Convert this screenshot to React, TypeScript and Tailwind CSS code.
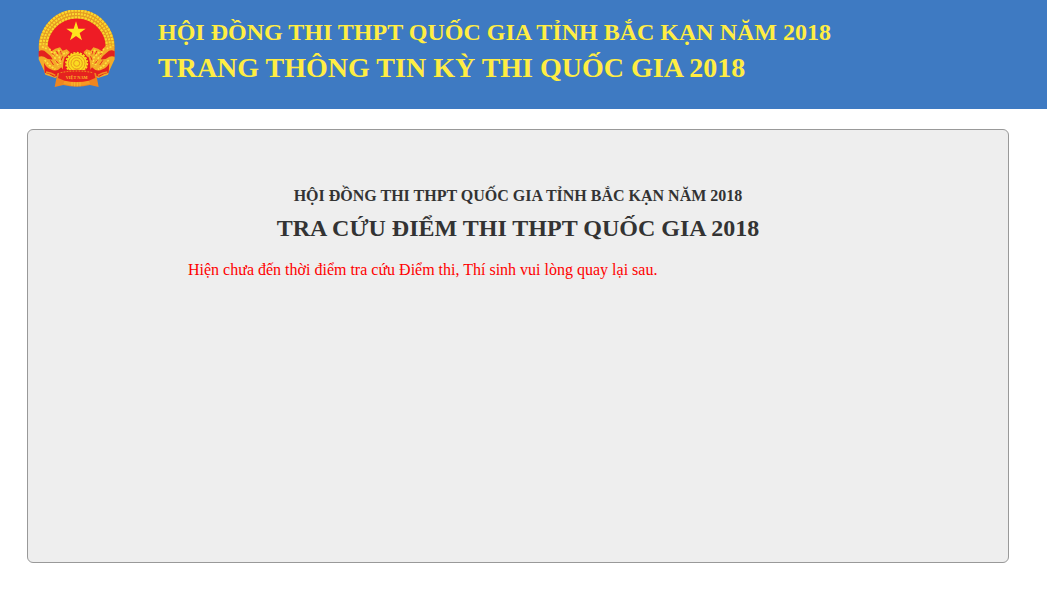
const STAR = '138,52 145,74 167,74 149,87 156,109 138,96 120,109 127,87 109,74 131,74';

function WheatSide() {
  return (
    <g>
      <path
        d="M28 126 L44 122 L56 128 L64 142 L76 134 L90 130 L98 140 L110 136 L119 144 L116 155 L104 160 L100 176 L98 206 L76 222 L46 212 L42 200 L26 166 Z"
        fill="#f3ab28"
      />
      <g fill="none" stroke="#fde33c" strokeWidth="5" strokeDasharray="6 4">
        <path d="M58 134 L74 160 L86 188" />
        <path d="M44 168 L58 184 L76 196" />
        <path d="M72 144 L88 160 L92 180" />
        <path d="M84 138 L98 150 L112 146" />
        <path d="M36 128 L50 134" />
      </g>
      <g fill="none" stroke="#ea2a20" strokeWidth="3" strokeLinecap="round">
        <path d="M66 148 L72 154" />
        <path d="M80 142 L84 150" />
        <path d="M92 142 L94 150" />
        <path d="M78 170 L84 178" />
        <path d="M62 170 L70 182" />
        <path d="M98 158 L94 168" />
      </g>
      <path d="M26 142 Q38 134 50 146 Q62 154 68 166 Q54 168 42 158 Q34 156 26 158 Z" fill="#e3201f" />
      <path d="M42 176 Q48 190 62 196 Q80 206 94 190 L104 204 L90 214 L72 218 Q56 208 44 206 Z" fill="#e3201f" />
      <path d="M48 204 Q64 206 76 214" fill="none" stroke="#f3901f" strokeWidth="4" />
    </g>
  );
}

function Emblem() {
  return (
    <svg viewBox="24 18 234 234" className="h-[78px] w-[78px]" role="img" aria-label="Quốc huy Việt Nam">
      <path d="M30 158 A113 113 0 1 1 250 158 L196 214 H84 Z" fill="#ee1c25" />
      <path d="M43 154 A100 100 0 1 1 237 154" fill="none" stroke="#e59a22" strokeWidth="27" />
      <g fill="none" stroke="#fbd92e">
        <path d="M34 154 A109 109 0 1 1 246 154" strokeWidth="7" strokeDasharray="7 3" />
        <path d="M43 154 A100 100 0 1 1 237 154" strokeWidth="6" strokeDasharray="6 3" strokeDashoffset="4" />
        <path d="M52 154 A91 91 0 1 1 228 154" strokeWidth="6" strokeDasharray="7 3" />
      </g>
      <polygon points={STAR} fill="#fee51d" />
      <WheatSide />
      <g transform="translate(280 0) scale(-1 1)">
        <WheatSide />
      </g>
      <circle cx="140" cy="178" r="37" fill="#e3201f" />
      <circle cx="140" cy="178" r="31" fill="#fbdc20" />
      <circle cx="140" cy="178" r="32" fill="none" stroke="#fbdc20" strokeWidth="5" strokeDasharray="6 4" />
      <g fill="none" stroke="#e89a1e" strokeWidth="3">
        <circle cx="140" cy="178" r="25" />
        <circle cx="140" cy="178" r="17" />
        <circle cx="140" cy="178" r="9" />
      </g>
      <path d="M82 208 L74 249 L100 243 Q140 253 180 243 L206 249 L198 208 Q140 190 82 208 Z" fill="#ef8620" />
      <path d="M104 228 Q140 242 176 228 L180 240 Q140 250 100 240 Z" fill="#f79a23" />
      <path d="M126 234 V246 M134 235 V247 M142 235 V247 M150 235 V247" stroke="#f8cf31" strokeWidth="2" />
      <path d="M88 204 Q140 190 192 204 L196 222 L176 230 Q140 238 104 230 L84 222 Z" fill="#e5221f" />
      <path d="M92 206 Q140 196 188 206" fill="none" stroke="#f2a020" strokeWidth="3" strokeDasharray="5 4" />
      <text
        x="140"
        y="226"
        textAnchor="middle"
        fill="#f9bd2a"
        fontFamily="Liberation Serif, serif"
        fontWeight="700"
        fontSize="13"
      >
        VIỆT NAM
      </text>
    </svg>
  );
}

export default function App() {
  return (
    <div className="min-h-screen bg-white font-['Liberation_Serif',serif] text-[#333333]">
      <header className="flex h-[109px] items-start bg-[#3e7ac2] px-[38px] py-[10px] text-[#ffed43]">
        <a href="#" className="shrink-0">
          <Emblem />
        </a>
        <div className="ml-[42px] pt-1 font-bold">
          <p className="text-[24px] leading-9">HỘI ĐỒNG THI THPT QUỐC GIA TỈNH BẮC KẠN NĂM 2018</p>
          <p className="text-[28px] leading-9">TRANG THÔNG TIN KỲ THI QUỐC GIA 2018</p>
        </div>
      </header>
      <main className="mt-5 mr-[38px] ml-[27px] min-h-[434px] rounded-md border border-[#999999] bg-[#eeeeee] px-40 pt-14">
        <h2 className="text-center text-[16px] leading-5 font-bold whitespace-nowrap">
          HỘI ĐỒNG THI THPT QUỐC GIA TỈNH BẮC KẠN NĂM 2018
        </h2>
        <h1 className="mt-2 text-center text-[24px] leading-7 font-bold whitespace-nowrap">
          TRA CỨU ĐIỂM THI THPT QUỐC GIA 2018
        </h1>
        <p className="mt-[18px] text-[16px] leading-5 text-[#ff0000]">
          Hiện chưa đến thời điểm tra cứu Điểm thi, Thí sinh vui lòng quay lại sau.
        </p>
      </main>
    </div>
  );
}
